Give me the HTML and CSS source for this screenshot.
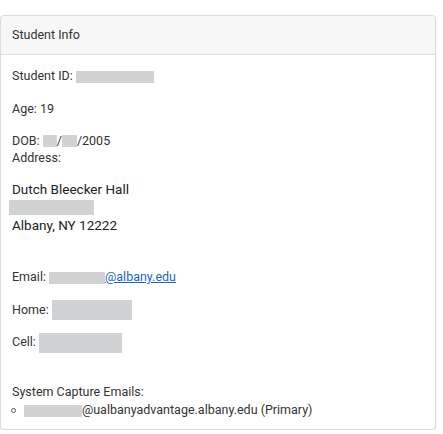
FILE: index.html
```html
<!DOCTYPE html>
<html>

<head>
    <meta name="viewport" content="width=device-width, initial-scale=1.0">
    <meta charset="utf-8" />
    <title>Student Info</title>
    <link rel="stylesheet" href="styles.css">
</head>

<body>
    <div class="card">
        <div class="card-header">Student Info</div>
        <div class="card-body">
            <p class="row">Student ID: <span class="redact" style="width: 78px"></span></p>
            <p class="row age">Age: 19</p>
            <p class="row dob">DOB: <span class="redact" style="width: 14px"></span>/<span class="redact" style="width: 15px"></span>/2005<br>Address:</p>
            <div class="address">
                Dutch Bleecker Hall<br>
                <span class="redact wide" style="width: 85px"></span><br>
                Albany, NY 12222
            </div>
            <p class="row">Email: <a href="#" class="link"><span class="redact" style="width: 56px"></span>@albany.edu</a></p>
            <p class="row">Home: <span class="redact tall" style="width: 80px"></span></p>
            <p class="row">Cell: <a href="#" class="link"><span class="redact tall" style="width: 83px"></span></a></p>
            <div class="capture">
                System Capture Emails:
                <ul>
                    <li><span class="redact" style="width: 58px"></span>@ualbanyadvantage.albany.edu (Primary)</li>
                </ul>
            </div>
        </div>
    </div>
</body>

</html>
```

FILE: styles.css
```css
body {
    margin: 0;
    padding: 0;
    background-color: #fff;
    font-family: Roboto, "Liberation Sans", sans-serif;
    font-size: 12.5px;
    color: #333;
}

.card {
    margin-top: 15px;
    width: 434px;
    border: 1px solid #dcdcdc;
    border-radius: 4px;
    box-shadow: 0 1px 2px rgba(0, 0, 0, 0.12);
    background: #fff;
}

.card-header {
    height: 38px;
    line-height: 38px;
    padding: 0 11px;
    background: #f7f7f7;
    border-bottom: 1px solid #dcdcdc;
    border-radius: 4px 4px 0 0;
}

.card-body {
    padding: 12px 11px 10px 11px;
}

.row {
    margin: 0 0 15.5px 0;
    line-height: 17px;
}

.age {
    margin-bottom: 15px;
}

.dob {
    margin-bottom: 14px;
}

.address {
    font-size: 13.5px;
    color: #222;
    line-height: 18px;
    margin-bottom: 34.5px;
}

.redact {
    display: inline-block;
    height: 12px;
    vertical-align: middle;
    background: #d1d2d4;
}

.wide {
    height: 15px;
    margin-left: -3px;
}

.tall {
    height: 20px;
    margin: -4px 0;
}

.link {
    color: #1a66c2;
}

.capture {
    margin-top: 33px;
    line-height: 18px;
}

.capture ul {
    margin: 0;
    padding: 0;
    list-style: none;
}

.capture li::before {
    content: "";
    display: inline-block;
    width: 3px;
    height: 3px;
    border: 1px solid #555;
    border-radius: 50%;
    margin: 0 8px 0 -1px;
    vertical-align: middle;
}
```
